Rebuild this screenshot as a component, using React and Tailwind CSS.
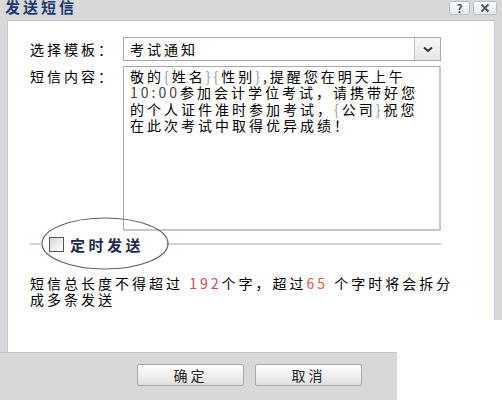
import React from 'react';

const cjk = { fontFamily: '"Noto Sans CJK SC", "Noto Sans", sans-serif' };

// 灰色的花括号占位符
function Brace({ children }) {
  return (
    <>
      <span className="text-[#9a9a9a]">{'{'}</span>
      {children}
      <span className="text-[#9a9a9a]">{'}'}</span>
    </>
  );
}

function TitleButton({ children }) {
  return (
    <div className="h-[14px] flex items-center justify-center rounded-[2px] border border-[#b9c2cc] bg-gradient-to-b from-[#ffffff] to-[#e3e8ee] text-[#3c4a5c]">
      {children}
    </div>
  );
}

function FooterButton({ children }) {
  return (
    <button className="w-[107px] h-[22px] rounded-[2px] border border-[#a9a9a9] bg-gradient-to-b from-[#fdfdfd] via-[#f1f1f1] to-[#dedede] text-[14px] leading-none tracking-[3px] text-[#222] flex items-center justify-center">
      {children}
    </button>
  );
}

export default function App() {
  return (
    <div className="w-[502px] h-[400px] bg-white overflow-hidden text-black" style={cjk}>
      {/* 标题栏 */}
      <div className="h-[20px] bg-[#d8d8d8] flex items-start justify-between pl-[5px] pr-[5px]">
        <div className="text-[15px] font-bold leading-none tracking-[3px] text-[#17396f] -mt-[1px]">发送短信</div>
        <div className="flex gap-[3px] pt-[1px]">
          <div className="w-[21px]">
            <TitleButton><span className="text-[11px] font-bold leading-none">?</span></TitleButton>
          </div>
          <div className="w-[24px]">
            <TitleButton>
              <svg width="10" height="10" viewBox="0 0 10 10">
                <path d="M1.5 1.5 L8.5 8.5 M8.5 1.5 L1.5 8.5" stroke="#4a5566" strokeWidth="1.8" fill="none" />
              </svg>
            </TitleButton>
          </div>
        </div>
      </div>

      {/* 主体 */}
      <div className="flex h-[332px]">
        <div className="w-[7px] bg-[#d8d8d8]" />
        <div className="flex-1 bg-white border-l border-[#b7cdee] border-t border-t-[#c4c4c4] pl-[22px] pt-[16px] pr-[53px]">
          {/* 选择模板 */}
          <div className="flex items-center">
            <div className="w-[93px] text-[14px] leading-none tracking-[3px]">选择模板：</div>
            <div className="flex-1 h-[24px] border border-[#a9a9a9] flex">
              <div className="flex-1 flex items-center pl-[6px] text-[14px] tracking-[3px] leading-none">考试通知</div>
              <div className="w-[26px] border-l border-[#c4c4c4] bg-gradient-to-b from-[#f8f8f8] to-[#e6e6e6] flex items-center justify-center">
                <svg width="10" height="7" viewBox="0 0 10 7">
                  <path d="M1 1.5 L5 5 L9 1.5" stroke="#333" strokeWidth="2" fill="none" />
                </svg>
              </div>
            </div>
          </div>

          {/* 短信内容 */}
          <div className="flex items-start mt-[5px]">
            <div className="w-[93px] text-[14px] leading-[16px] tracking-[3px] pt-[2px]">短信内容：</div>
            <div className="flex-1 h-[165px] border border-[#a9a9a9] border-r-2 border-b-2 border-r-[#c8c8c8] border-b-[#c8c8c8] pl-[6px] pt-[1px] text-[14px] leading-[16.3px] tracking-[3px]">
              敬的<Brace>姓名</Brace><Brace>性别</Brace>,提醒您在明天上午<br />
              <span className="text-[#444]">10:00</span>参加会计学位考试，请携带好您<br />
              的个人证件准时参加考试，<Brace>公司</Brace>祝您<br />
              在此次考试中取得优异成绩！
            </div>
          </div>

          {/* 定时发送 */}
          <div className="relative flex items-center h-[16px] mt-[5px]">
            <div className="w-[11px] h-[2px] bg-[#d2d2d2]" />
            <div className="flex items-center pl-[8px] pr-[22px]">
              <div className="w-[15px] h-[15px] border border-[#4d5866] bg-gradient-to-br from-[#d8d8d8] to-[#ffffff]" />
              <div className="ml-[6px] text-[15px] font-bold leading-none tracking-[3.5px] text-[#1b2a4e]">定时发送</div>
            </div>
            <div className="flex-1 h-[2px] bg-[#d2d2d2]" />
            <svg className="absolute left-[11px] -top-[19px]" width="128" height="53" viewBox="0 0 128 53">
              <ellipse cx="64" cy="26.5" rx="63" ry="25.5" fill="none" stroke="#6e5d5d" strokeWidth="1.2" />
            </svg>
          </div>

          {/* 提示 */}
          <div className="mt-[23px] text-[14px] leading-[16px] tracking-[3px] -mr-[20px]">
            短信总长度不得超过 <span className="text-[#e0405c]">192</span>个字，超过<span className="text-[#f0553a]">65</span> 个字时将会拆分<br />
            成多条发送
          </div>
        </div>
        <div className="w-[8px] h-[300px] bg-[#d8d8d8] border-l border-[#b7cdee]" />
      </div>

      {/* 底部按钮 */}
      <div className="w-[397px] h-[48px] bg-[#d8d8d8] border-t border-[#c4c4c4] flex gap-[11px] pl-[137px] pt-[11px]">
        <FooterButton>确定</FooterButton>
        <FooterButton>取消</FooterButton>
      </div>
    </div>
  );
}
